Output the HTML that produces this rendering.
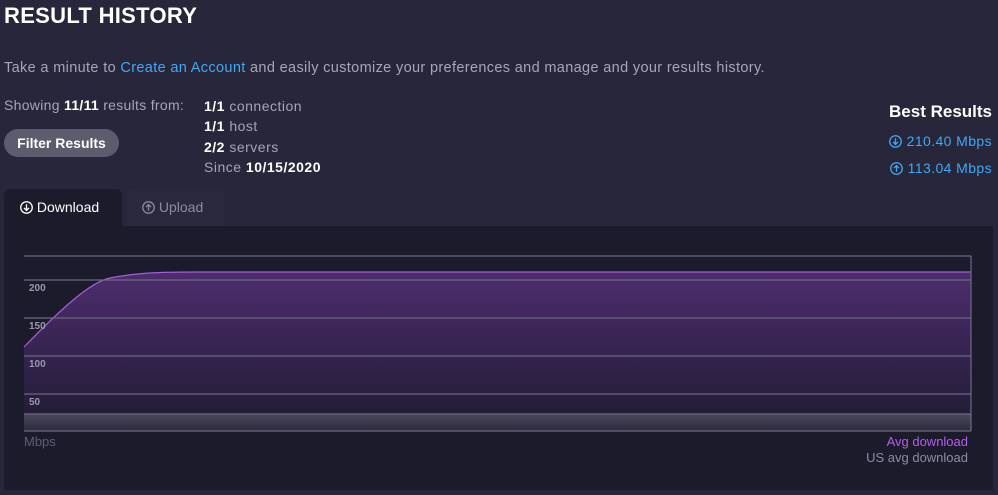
<!DOCTYPE html>
<html><head><meta charset="utf-8"><style>
*{margin:0;padding:0;box-sizing:border-box}
body{width:998px;height:495px;background:#27263a;font-family:"Liberation Sans",sans-serif;color:#a6a6b8;position:relative;overflow:hidden}
.a{position:absolute;white-space:nowrap}
b{color:#fff;font-weight:bold}
.blue{color:#3fa9f5}
.ic{display:inline-block;width:13px;height:13px;vertical-align:-2px}
</style></head><body>
<svg width="0" height="0" style="position:absolute"><defs>
<symbol id="dn" viewBox="0 0 14 14"><circle cx="7" cy="7" r="6.2" fill="none" stroke="currentColor" stroke-width="1.4"/><path d="M7 3.5V10M4.3 7.5L7 10.2 9.7 7.5" fill="none" stroke="currentColor" stroke-width="1.4"/></symbol>
<symbol id="up" viewBox="0 0 14 14"><circle cx="7" cy="7" r="6.2" fill="none" stroke="currentColor" stroke-width="1.4"/><path d="M7 10.5V4M4.3 6.5L7 3.8 9.7 6.5" fill="none" stroke="currentColor" stroke-width="1.4"/></symbol>
</defs></svg>
<div class="a" style="left:4px;top:3px;font-size:22px;font-weight:bold;color:#fff;letter-spacing:0.3px">RESULT HISTORY</div>
<div class="a" style="left:4px;top:60px;font-size:14.5px;letter-spacing:0.35px">Take a minute to <span class="blue">Create an Account</span> and easily customize your preferences and manage and your results history.</div>
<div class="a" style="left:4px;top:97px;font-size:14px;letter-spacing:0.3px">Showing <b>11/11</b> results from:</div>
<div class="a" style="left:4px;top:129px;width:115px;height:28px;border-radius:14px;background:#5d5b6e;color:#fff;font-weight:bold;font-size:14px;text-align:center;line-height:28px">Filter Results</div>
<div class="a" style="left:204px;top:96px;font-size:14px;line-height:20.3px;letter-spacing:0.5px">
<b>1/1</b> connection<br><b>1/1</b> host<br><b>2/2</b> servers<br>Since <b>10/15/2020</b></div>
<div class="a" style="right:6px;top:102px;font-size:17px;font-weight:bold;color:#fff">Best Results</div>
<div class="a blue" style="right:6px;top:133px;font-size:14px;letter-spacing:0.4px"><svg class="ic"><use href="#dn"/></svg> 210.40 Mbps</div>
<div class="a blue" style="right:6px;top:160px;font-size:14px;letter-spacing:0.4px"><svg class="ic"><use href="#up"/></svg> 113.04 Mbps</div>
<div class="a" style="left:4px;top:189px;width:118px;height:40px;background:#1c1b2b;border-radius:6px 6px 0 0;color:#fff;font-size:14px;padding:10px 0 0 16px"><svg class="ic"><use href="#dn"/></svg> Download</div>
<div class="a" style="left:127px;top:189px;width:97px;height:37px;background:#2a293d;border-radius:6px 6px 0 0;color:#8c8ca0;font-size:14px;padding:10px 0 0 15px"><svg class="ic"><use href="#up"/></svg> Upload</div>
<div class="a" style="left:4px;top:226px;width:989px;height:264px;background:#1c1b2b"></div>
<svg class="a" style="left:0;top:0" width="998" height="495">
<defs><linearGradient id="g" x1="0" y1="0" x2="0" y2="1"><stop offset="0" stop-color="#4d2d6d"/><stop offset="1" stop-color="#231d38"/></linearGradient>
<linearGradient id="b" x1="0" y1="0" x2="0" y2="1"><stop offset="0" stop-color="#4a475c"/><stop offset="1" stop-color="#2d2b3d"/></linearGradient></defs>
<path d="M24 347 C60 310 90 282 110 278 C140 272 170 272 200 272 L971 272 L971 414 L24 414 Z" fill="url(#g)"/>
<path d="M24 347 C60 310 90 282 110 278 C140 272 170 272 200 272 L971 272" fill="none" stroke="#a45ed8" stroke-width="1.2"/>
<rect x="24" y="414" width="947" height="17" fill="url(#b)"/>
<g stroke="#6c6a80" stroke-width="1.2"><line x1="24" y1="256" x2="971" y2="256"/><line x1="24" y1="280" x2="971" y2="280"/><line x1="24" y1="318" x2="971" y2="318"/><line x1="24" y1="356" x2="971" y2="356"/><line x1="24" y1="394" x2="971" y2="394"/><line x1="24" y1="414" x2="971" y2="414"/><line x1="24" y1="431" x2="971" y2="431"/><line x1="971" y1="256" x2="971" y2="431"/></g>
<g fill="#9a98b0" font-family="Liberation Sans" font-size="10" font-weight="bold"><text x="29" y="291">200</text><text x="29" y="329">150</text><text x="29" y="367">100</text><text x="29" y="405">50</text></g>
</svg>
<div class="a" style="left:24px;top:434px;font-size:13px;color:#5f5d72">Mbps</div>
<div class="a" style="right:30px;top:434px;font-size:13px;color:#b65cf0">Avg download</div>
<div class="a" style="right:30px;top:450px;font-size:13px;color:#8c8ca0">US avg download</div>
</body></html>
